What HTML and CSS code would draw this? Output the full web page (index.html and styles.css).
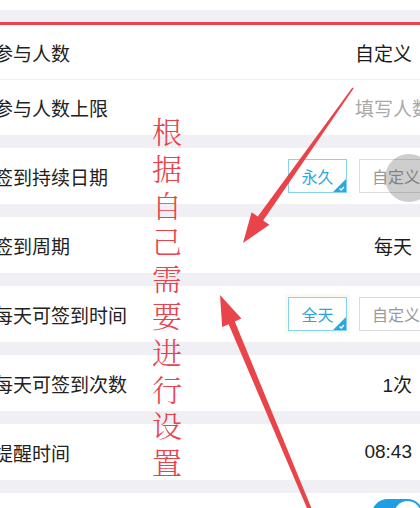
FILE: index.html
```html
<!DOCTYPE html>
<html lang="zh-CN">
<head>
	<meta charset="UTF-8">
	<title>签到设置</title>
	<link rel="stylesheet" href="styles.css">
</head>
<body>
	<div class="screen">
		<div class="cell-blank"></div>
		<div class="gap gap-top"></div>
		<div class="group group-marked">
			<div class="row row-first">
				<span class="label">参与人数</span>
				<span class="value">自定义</span>
			</div>
			<div class="row row-second">
				<span class="label">参与人数上限</span>
				<span class="value placeholder">填写人数</span>
			</div>
		</div>
		<div class="gap"></div>
		<div class="row">
			<span class="label">签到持续日期</span>
			<div class="choices">
				<span class="choice choice-on">永久
					<svg class="tick" width="13" height="13" viewBox="0 0 13 13"><polygon points="13,0 13,13 0,13" fill="#2ba6df"/><path d="M6.5 9.6 L8.2 11 L11 8" stroke="#fff" stroke-width="1.3" fill="none"/></svg>
				</span>
				<span class="choice choice-wide">自定义</span>
			</div>
		</div>
		<div class="gap"></div>
		<div class="row">
			<span class="label">签到周期</span>
			<span class="value">每天</span>
		</div>
		<div class="gap"></div>
		<div class="row">
			<span class="label">每天可签到时间</span>
			<div class="choices">
				<span class="choice choice-on choice-glow">全天
					<svg class="tick" width="13" height="13" viewBox="0 0 13 13"><polygon points="13,0 13,13 0,13" fill="#2ba6df"/><path d="M6.5 9.6 L8.2 11 L11 8" stroke="#fff" stroke-width="1.3" fill="none"/></svg>
				</span>
				<span class="choice choice-wide">自定义</span>
			</div>
		</div>
		<div class="gap"></div>
		<div class="row">
			<span class="label">每天可签到次数</span>
			<span class="value">1次</span>
		</div>
		<div class="gap"></div>
		<div class="row">
			<span class="label">提醒时间</span>
			<span class="value">08:43</span>
		</div>
		<div class="gap"></div>
		<div class="row row-last">
			<span class="switch"><span class="knob"></span></span>
		</div>

		<div class="touch"></div>

		<svg class="arrows" width="420" height="508" viewBox="0 0 420 508">
			<polygon fill="#e8444a" points="353.6,88.4 263.2,220.4 269.4,224.8 243,243 251.6,212.2 257.8,216.6 352.4,87.6"/>
			<polygon fill="#e8444a" points="312.2,510 234.8,321.6 241.4,318.6 220,295 222.2,327 228.6,324.2 308.2,511"/>
		</svg>

		<div class="note">根据自己需要进行设置</div>
	</div>
</body>
</html>
```

FILE: styles.css
```css
* {
	margin: 0;
	padding: 0;
	box-sizing: border-box;
}

body {
	background-color: #efeff4;
	font-family: "Liberation Sans", "Noto Sans CJK SC", sans-serif;
}

.screen {
	position: relative;
	width: 420px;
	height: 508px;
	overflow: hidden;
	background-color: #efeff4;
}

.cell-blank {
	height: 10px;
	background-color: #ffffff;
}

.gap {
	height: 13px;
}

.gap-top {
	height: 12px;
}

.group-marked {
	border-top: 3px solid #e9444b;
}

.row {
	display: flex;
	align-items: center;
	height: 56px;
	padding-right: 8px;
	background-color: #ffffff;
}

.row-first {
	height: 55px;
	border-bottom: 1px solid #f0f0f0;
}

.row-second {
	height: 55px;
}

.row-last {
	height: 16px;
	align-items: flex-start;
	justify-content: flex-end;
	padding-top: 6px;
	overflow: visible;
}

.label {
	margin-left: -6px;
	font-size: 19px;
	color: #222222;
}

.value {
	margin-left: auto;
	font-size: 19px;
	color: #1c1c1c;
}

.placeholder {
	margin-right: -19px;
	color: #a9a9a9;
	white-space: nowrap;
}

.choices {
	display: flex;
	gap: 12px;
	margin-left: auto;
	margin-right: -17px;
}

.choice {
	position: relative;
	display: flex;
	align-items: center;
	justify-content: center;
	width: 59px;
	height: 34px;
	border: 1px solid #dcdcdc;
	font-size: 16px;
	color: #9a9a9a;
}

.choice-wide {
	width: 70px;
	padding-right: 8px;
	justify-content: flex-end;
}

.choice-on {
	border-color: #86d3ef;
	color: #2aa7de;
}

.choice-glow {
	box-shadow: 0 0 0 3px #fbfaf1;
}

.tick {
	position: absolute;
	right: 0;
	bottom: 0;
}

.switch {
	position: relative;
	display: block;
	width: 51px;
	height: 31px;
	margin-right: -11px;
	border-radius: 16px;
	background-color: #1e9fe3;
}

.knob {
	position: absolute;
	top: 2px;
	right: 2px;
	width: 27px;
	height: 27px;
	border-radius: 50%;
	background-color: #ffffff;
}

.touch {
	position: absolute;
	left: 385px;
	top: 154px;
	width: 48px;
	height: 48px;
	border-radius: 50%;
	background-color: rgba(60, 60, 60, 0.25);
}

.arrows {
	position: absolute;
	left: 0;
	top: 0;
}

.note {
	position: absolute;
	left: 152px;
	top: 112px;
	width: 30px;
	font-family: "Noto Serif CJK SC", "Noto Sans CJK SC", serif;
	font-size: 30px;
	font-weight: 300;
	line-height: 36.8px;
	color: #e8434b;
	text-align: center;
}
```
